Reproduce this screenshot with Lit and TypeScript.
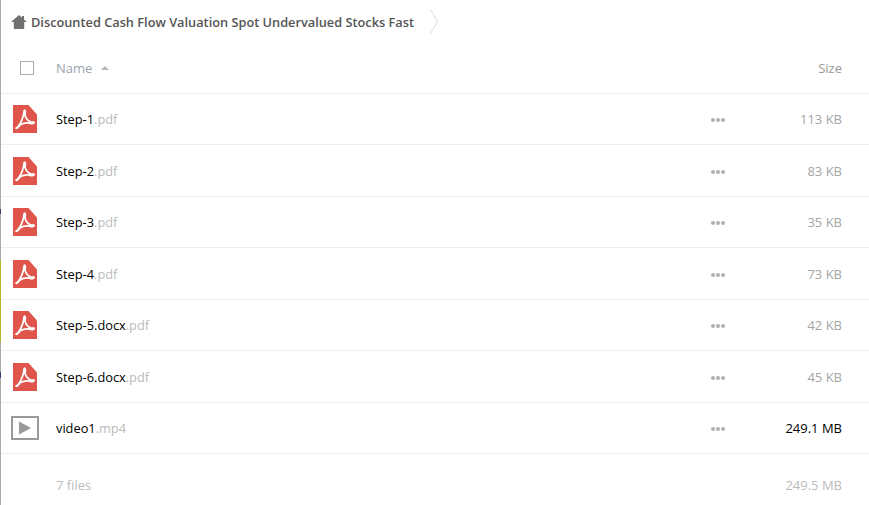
import { LitElement, html, css, svg } from "lit";
import { customElement } from "lit/decorators.js";

const FILES = [
  { name: "Step-1", ext: ".pdf", size: "113 KB", kind: "pdf" },
  { name: "Step-2", ext: ".pdf", size: "83 KB", kind: "pdf" },
  { name: "Step-3", ext: ".pdf", size: "35 KB", kind: "pdf" },
  { name: "Step-4", ext: ".pdf", size: "73 KB", kind: "pdf" },
  { name: "Step-5.docx", ext: ".pdf", size: "42 KB", kind: "pdf" },
  { name: "Step-6.docx", ext: ".pdf", size: "45 KB", kind: "pdf" },
  { name: "video1", ext: ".mp4", size: "249.1 MB", kind: "video" },
];

const pdfIcon = svg`<svg class="pdf" width="24" height="28" viewBox="0 0 24 28">
  <path d="M0 0H15.5L24 9.5V28H0Z" fill="#e0554b"/>
  <path d="M3 23.2C5.8 22.2 9 15.8 10.3 10.8C10.9 8.3 10.6 5 11.6 5C12.6 5 12.5 8 12 10.2C13 13.6 15.4 16 18 17C19.4 17.3 21.2 16.4 21.2 17.6C21.2 18.9 18.4 18.9 16.6 18.2C13.4 17.5 10 18.2 7.2 19.8C5.9 21.2 3.9 24.1 3 23.2Z" fill="none" stroke="#fff" stroke-width="1.7" stroke-linejoin="round"/>
</svg>`;

const videoIcon = svg`<svg width="28" height="24" viewBox="0 0 28 24">
  <rect x="1" y="1" width="26" height="22" fill="none" stroke="#9a9a9a" stroke-width="2"/>
  <path d="M8 5.5L20 12L8 18.5Z" fill="#9a9a9a"/>
</svg>`;

@customElement("app-root")
export class AppRoot extends LitElement {
  static styles = css`
    :host {
      display: flex;
      width: 869px;
      height: 505px;
      background: #fff;
      overflow: hidden;
      font-family: "Open Sans", sans-serif;
      font-size: 13px;
      color: #000;
    }
    .strip {
      width: 1px;
      flex: none;
      background: linear-gradient(
        to bottom,
        #a9adab 0 209px,
        #3b3f6b 209px 214px,
        #a9adab 214px 260px,
        #b5b52c 260px 342px,
        #a9adab 342px 372px,
        #34407a 372px 378px,
        #a9adab 378px 505px
      );
    }
    .main {
      flex: 1;
      min-width: 0;
      display: flex;
      flex-direction: column;
    }
    .crumbs {
      height: 43px;
      display: flex;
      align-items: center;
      padding-left: 10px;
      color: #555;
      font-weight: 600;
      font-size: 12.77px;
    }
    .crumbs .home {
      margin-right: 4px;
      display: block;
    }
    .crumbs .chev {
      margin-left: 16px;
      display: block;
    }
    .head {
      height: 50px;
      display: flex;
      align-items: center;
      border-bottom: 1px solid #eee;
      color: #9aa3ab;
    }
    .check-cell {
      width: 55px;
      flex: none;
      display: flex;
      justify-content: center;
      padding-right: 3px;
      box-sizing: border-box;
    }
    .check {
      width: 12px;
      height: 12px;
      border: 1px solid #adadad;
      background: #fff;
    }
    .sort {
      width: 0;
      height: 0;
      margin-left: 9px;
      border-left: 4px solid transparent;
      border-right: 4px solid transparent;
      border-bottom: 4px solid #b5b5b5;
    }
    .size-head {
      margin-left: auto;
      padding-right: 27px;
      color: #999;
    }
    .row {
      height: 51.43px;
      box-sizing: border-box;
      padding-top: 0.5px;
      display: flex;
      align-items: center;
      border-bottom: 1px solid #eee;
    }
    .icon-cell {
      width: 55px;
      flex: none;
      display: flex;
      justify-content: center;
      padding-right: 7px;
      box-sizing: border-box;
    }
    .icon-cell svg {
      display: block;
    }
    .ext {
      color: #bbb;
    }
    .name {
      flex: 1;
      font-size: 12.8px;
    }
    .dots {
      display: flex;
      gap: 1px;
      margin-top: 2px;
      margin-right: 3px;
    }
    .dots i {
      width: 4px;
      height: 4px;
      border-radius: 50%;
      background: #b0b0b0;
    }
    .size {
      width: 141px;
      flex: none;
      padding-right: 27px;
      box-sizing: border-box;
      text-align: right;
      color: #a5a5a5;
    }
    .size.big {
      color: #000;
    }
    .foot {
      flex: 1;
      display: flex;
      align-items: center;
      color: #bbb;
      padding: 11px 27px 0 55px;
    }
    .foot .total {
      margin-left: auto;
    }
  `;

  render() {
    return html`
      <div class="strip"></div>
      <div class="main">
        <div class="crumbs">
          <svg class="home" width="16" height="14" viewBox="0 0 16 14">
            <path d="M8 0L11 2.6V1H13V4.4L16 7H13.2V14H2.8V7H0Z" fill="#707070"/>
          </svg>
          <span>Discounted Cash Flow Valuation Spot Undervalued Stocks Fast</span>
          <svg class="chev" width="8" height="25" viewBox="0 0 8 25">
            <path d="M0.5 0.5L7.5 12.5L0.5 24.5" fill="none" stroke="#dcdcdc" stroke-width="1"/>
          </svg>
        </div>
        <div class="head">
          <div class="check-cell"><div class="check"></div></div>
          <span>Name</span>
          <div class="sort"></div>
          <span class="size-head">Size</span>
        </div>
        ${FILES.map(
          (f) => html`
            <div class="row">
              <div class="icon-cell">${f.kind === "pdf" ? pdfIcon : videoIcon}</div>
              <div class="name">${f.name}<span class="ext">${f.ext}</span></div>
              <div class="dots"><i></i><i></i><i></i></div>
              <div class="size ${f.kind === "video" ? "big" : ""}">${f.size}</div>
            </div>
          `
        )}
        <div class="foot">
          <span>7 files</span>
          <span class="total">249.5 MB</span>
        </div>
      </div>
    `;
  }
}
